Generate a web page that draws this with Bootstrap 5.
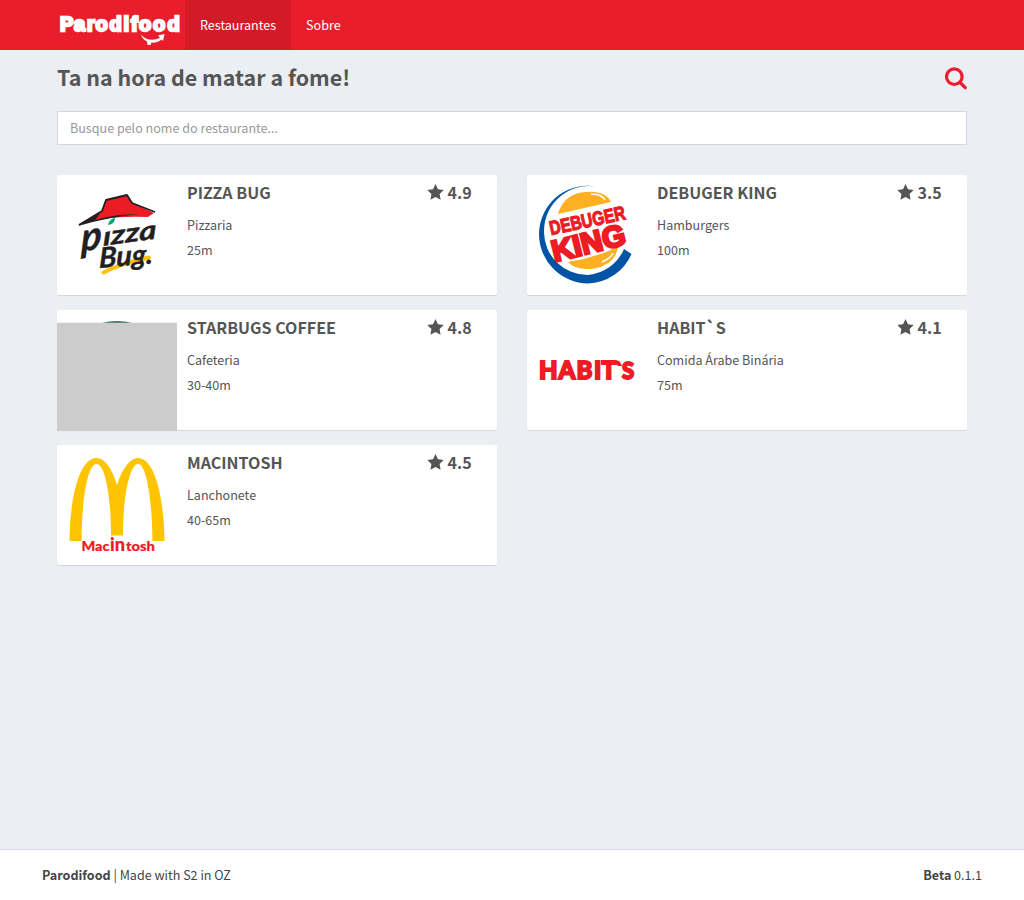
<!DOCTYPE html>
<html lang="pt-BR">
<head>
<meta charset="utf-8">
<meta name="viewport" content="width=device-width, initial-scale=1">
<title>Parodifood</title>
<link rel="stylesheet" href="https://cdn.jsdelivr.net/npm/bootstrap@5.3.0/dist/css/bootstrap.min.css">
<style>
body{background:#ebeef3;color:#555;font-family:"Noto Sans CJK JP",sans-serif;font-size:12.55px;line-height:20px}
.page-width{max-width:940px;padding:0 15px}
.topbar{background:#ea1d2c;height:50px}
.topbar .nav-link{color:#fff;padding:15px;line-height:20px;height:50px}
.topbar .nav-link.active{background:#d31a27}
.brand{width:128px;height:50px}
.heading-row{padding-top:14px;height:61px}
.page-title{font-size:21.45px;font-weight:700;line-height:26px}
.search-icon{margin-top:1px}
.search-box{height:34px;border:1px solid #d2d6de;border-radius:0;padding:5px 12px 7px;font-size:12.55px;line-height:20px}
.search-box::placeholder{color:#999;opacity:1}
.places{--bs-gutter-x:30px;--bs-gutter-y:15px;padding-top:30px}
.place{height:120px;background:#fff;border-radius:2px;box-shadow:0 1px 1px rgba(0,0,0,.1)}
.place-info{padding:7px 0 0 10px}
.place-name,.rating{font-size:16.05px;font-weight:700;line-height:20px}
.rating{width:70px}
.rating svg{margin:1px .5px 0 0}
.place-kind{margin-top:13px}
.place-time{margin-top:5px}
.footer-bar{height:51px;background:#fff;border-top:1px solid #d2d6de;color:#444}
.footer-inner{max-width:940px;padding:15px 0 0}
svg{display:block;flex:none}
</style>
</head>
<body class="d-flex flex-column min-vh-100">
<header class="topbar">
  <nav class="container page-width d-flex">
    <a href="#" class="brand" aria-label="Parodifood">
      <svg width="128" height="50" fill="#fff">
        <text x="3 17 30 38.500 52.500 66.500 74 82 96 110.500" y="31" font-family="Liberation Sans" font-weight="700" font-size="20" stroke="#fff" stroke-width="2.400">Parodifood</text>
        <path d="M84 34.500C88 40 97 41.500 103 37.500L101 35.500L107.500 34L106 41L104.500 39.500C101 42.500 97 43 94.500 42.500L93.500 45H90.500L90 41.500C87 40 85 38 84 34.500Z"/>
      </svg>
    </a>
    <div class="nav">
      <a class="nav-link active" href="#">Restaurantes</a>
      <a class="nav-link" href="#">Sobre</a>
    </div>
  </nav>
</header>
<main class="container page-width flex-grow-1">
  <div class="heading-row d-flex justify-content-between align-items-start">
    <h1 class="page-title m-0">Ta na hora de matar a fome!</h1>
    <svg class="search-icon" width="23" height="26" fill="none" stroke="#ea1d2c"><circle cx="10.300" cy="11.700" r="7.800" stroke-width="3.200"/><path d="M16 17.500L21.200 22.700" stroke-width="3.300" stroke-linecap="round"/></svg>
  </div>
  <input class="form-control search-box" placeholder="Busque pelo nome do restaurante...">
  <div class="row places">
    <div class="col-6"><article class="place d-flex">
      <svg width="120" height="120">
        <path d="M22 49L45 36L49 25L70 20L76 28L97 38L91 42Q53 40 22 49Z" fill="#ed1c24"/>
        <path d="M22 50L45 36L49 25L70 20L75 28L98 37" fill="none" stroke="#231f20" stroke-width="1.800" stroke-linejoin="round"/>
        <path d="M21 51L43 38Q41 42 38 45Q57 39 83 39Q56 41 21 51Z" fill="#231f20"/>
        <path d="M51 50Q52 44 58 43Q58 49 51 50Z" fill="#00a878"/>
        <path d="M46.500 97.500Q65 88 92 82.500" fill="none" stroke="#ffc20e" stroke-width="4" stroke-linecap="round"/>
        <g fill="#231f20" stroke="#231f20" stroke-width=".4" font-family="Lato" font-style="italic" font-weight="700">
          <text transform="translate(24 77) rotate(-11) skewX(-12)" font-size="39">p</text>
          <text transform="translate(46 71) rotate(-8) skewX(-8)" font-size="26" textLength="54" lengthAdjust="spacingAndGlyphs">ızza</text>
          <text transform="translate(42 93) rotate(-5) skewX(-6)" font-size="28" textLength="54" lengthAdjust="spacingAndGlyphs">Bug.</text>
        </g>
      </svg>
      <div class="place-info flex-grow-1"></div>
    </article></div>
    <div class="col-6"><article class="place d-flex">
      <svg width="120" height="120">
        <path d="M75 13A48.500 48.500 0 0 0 12 59A49.500 49.500 0 0 0 61 108.500A49 49 0 0 0 104.500 79L97 74A43 44 0 0 1 61 100A44 43 0 0 1 17 57A45 45 0 0 1 75 13Z" fill="#0054a6"/>
        <path d="M31 39Q36 21 54 17.500Q78 14 84 27Z M41 87Q67 83 91 72Q88 90 67 93.500Q49 96 41 87Z" fill="#fdb022"/>
        <path d="M64 19Q75 19 78 25M75 87Q84 83 86 78" fill="none" stroke="#fff" stroke-width="1.500"/>
        <g fill="#ed1c24" stroke="#ed1c24" font-family="Liberation Sans" font-weight="700">
          <text transform="translate(24 60) rotate(-12)" font-size="19.500" stroke-width="1.200" textLength="77" lengthAdjust="spacingAndGlyphs">DEBUGER</text>
          <text transform="translate(27.500 87) rotate(-14)" font-size="30" stroke-width="2.600" textLength="75" lengthAdjust="spacingAndGlyphs">KING</text>
        </g>
      </svg>
      <div class="place-info flex-grow-1"></div>
    </article></div>
    <div class="col-6"><article class="place d-flex">
      <svg width="120" height="121"><ellipse cx="60" cy="18" rx="21" ry="7" fill="#3f745f"/><path d="M0 12.700H120V121H0Z" fill="#ccc"/></svg>
      <div class="place-info flex-grow-1"></div>
    </article></div>
    <div class="col-6"><article class="place d-flex">
      <svg width="120" height="120"><text x="12 31.500 49.500 67 74.500 87 95" y="68.500" fill="#ed1c24" stroke="#ed1c24" stroke-width="1.800" font-family="Lato" font-weight="900" font-size="24">HABIT`<tspan font-size="22">S</tspan></text></svg>
      <div class="place-info flex-grow-1"></div>
    </article></div>
    <div class="col-6"><article class="place d-flex">
      <svg width="120" height="120">
        <path d="M12.500 96C13 50 23 13 39.500 13C48 13 55 24 60 40C65 24 73 13 81 13C97 13 107 50 107.500 96H95.500C95 51 89 19 81 19C73 19 66 50 66 90.500H54C54 50 48 19 39.500 19C31 19 25 51 24.500 96Z" fill="#ffc400"/>
        <g fill="#ed1c24" stroke="#ed1c24" stroke-width=".2" font-family="Lato" font-weight="900"><text x="24.500" y="106" font-size="12.300" textLength="28" lengthAdjust="spacingAndGlyphs">Mac</text><text x="53" y="106" font-size="18" textLength="15" lengthAdjust="spacingAndGlyphs">in</text><text x="69" y="106" font-size="12.300" textLength="29" lengthAdjust="spacingAndGlyphs">tosh</text></g>
      </svg>
      <div class="place-info flex-grow-1"></div>
    </article></div>
  </div>
</main>
<footer class="footer-bar">
  <div class="container footer-inner d-flex justify-content-between">
    <span><b>Parodifood</b> | Made with S2 in OZ</span><span><b>Beta</b> 0.1.1</span>
  </div>
</footer>
<script src="https://cdn.jsdelivr.net/npm/bootstrap@5.3.0/dist/js/bootstrap.bundle.min.js"></script>
<script>
const places = [
  ['PIZZA BUG','Pizzaria','25m','4.9'],
  ['DEBUGER KING','Hamburgers','100m','3.5'],
  ['STARBUGS COFFEE','Cafeteria','30-40m','4.8'],
  ['HABIT`S','Comida Árabe Binária','75m','4.1'],
  ['MACINTOSH','Lanchonete','40-65m','4.5']
];
document.querySelectorAll('.place-info').forEach((el, i) => {
  const [name, kind, time, score] = places[i];
  el.innerHTML = `<div class="d-flex justify-content-between"><span class="place-name">${name}</span>
    <span class="rating d-flex"><svg width="20" height="19" fill="#555"><path d="M8.500 1L11 6.200L16.700 7L12.600 11L13.600 16.800L8.500 14.100L3.400 16.800L4.400 11L.3 7L6 6.200Z"/></svg>${score}</span></div>
    <div class="place-kind">${kind}</div><div class="place-time">${time}</div>`;
});
</script>
</body>
</html>
